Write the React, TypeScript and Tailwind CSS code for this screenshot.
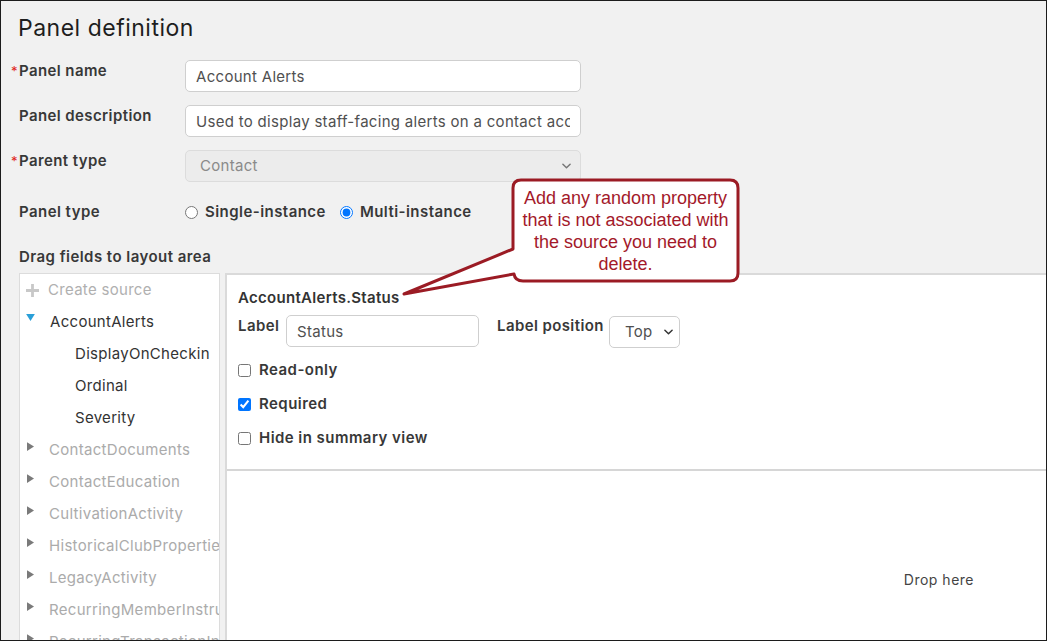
import { useState } from 'react'

const TREE_COLLAPSED = [
  'ContactDocuments',
  'ContactEducation',
  'CultivationActivity',
  'HistoricalClubProperties',
  'LegacyActivity',
  'RecurringMemberInstructions',
  'RecurringTransactionInstructions',
]

const CHILDREN = ['DisplayOnCheckin', 'Ordinal', 'Severity']

function Chevron({ className }: { className?: string }) {
  return (
    <svg viewBox="0 0 10 6" className={className} fill="none">
      <path d="M1 1l4 4 4-4" stroke="currentColor" strokeWidth="1.6" strokeLinecap="round" strokeLinejoin="round" />
    </svg>
  )
}

function FormRow({ label, required, children }: { label: string; required?: boolean; children: React.ReactNode }) {
  return (
    <div className="flex items-start">
      <div className="w-[184px] shrink-0 flex pl-[10px] pt-[2px] leading-[18px]">
        <span className="w-[8px] text-[#e0241b] text-[13px]">{required ? '*' : ''}</span>
        <span className="text-[15px] font-semibold tracking-[0.4px] text-[#383838]">{label}</span>
      </div>
      {children}
    </div>
  )
}

export default function App() {
  const [panelType, setPanelType] = useState<'single' | 'multi'>('multi')
  const [readOnly, setReadOnly] = useState(false)
  const [required, setRequired] = useState(true)
  const [hideSummary, setHideSummary] = useState(false)

  return (
    <div className="relative w-[1047px] h-[641px] overflow-hidden border border-[#1c1c1c] bg-[#f1f1f1] font-[Inter,sans-serif] text-[#383838]">
      {/* 見出し */}
      <div className="pl-[17px] pt-[12px] h-[59px] text-[23px] leading-[30px] tracking-[0.5px] text-[#1e1e1e]">Panel definition</div>

      <div className="flex flex-col gap-[13px]">
        <FormRow label="Panel name" required>
          <input
            defaultValue="Account Alerts"
            className="w-[396px] h-[32px] rounded-[5px] border border-[#cfcfcf] bg-white px-[10px] text-[15px] tracking-[0.3px] text-[#505050] outline-none"
          />
        </FormRow>
        <FormRow label="Panel description">
          <input
            defaultValue="Used to display staff-facing alerts on a contact account"
            className="w-[396px] h-[32px] rounded-[5px] border border-[#cfcfcf] bg-white px-[10px] text-[15px] tracking-[0.3px] text-[#505050] outline-none"
          />
        </FormRow>
        <FormRow label="Parent type" required>
          <div className="w-[396px] h-[32px] rounded-[5px] border border-[#dcdcdc] bg-[#ececec] pl-[14px] pr-[9px] flex items-center justify-between text-[15px] tracking-[0.3px] text-[#8a8a8a]">
            <span>Contact</span>
            <Chevron className="w-[9px] h-[6px] text-[#777]" />
          </div>
        </FormRow>
      </div>

      <div className="flex items-center mt-[19px] h-[22px] text-[15px] font-semibold tracking-[0.45px]">
        <div className="w-[184px] shrink-0 pl-[18px]">Panel type</div>
        <label className="flex items-center gap-[7px]">
          <input
            type="radio"
            checked={panelType === 'single'}
            onChange={() => setPanelType('single')}
            className="m-0 w-[13px] h-[13px]"
          />
          Single-instance
        </label>
        <label className="flex items-center gap-[7px] ml-[14px]">
          <input
            type="radio"
            checked={panelType === 'multi'}
            onChange={() => setPanelType('multi')}
            className="m-0 w-[13px] h-[13px]"
          />
          Multi-instance
        </label>
      </div>

      <div className="pl-[18px] mt-[25px] h-[25px] text-[15px] font-semibold tracking-[0.45px] leading-[18px]">Drag fields to layout area</div>

      <div className="flex h-[400px]">
        {/* ツリー */}
        <div className="ml-[18px] w-[201px] shrink-0 border-l border-t border-r border-[#dcdcdc] bg-white overflow-hidden text-[15px] tracking-[0.3px] whitespace-nowrap">
          <div className="h-[32px] flex items-center pl-[6px] text-[#b0b0b0]">
            <svg viewBox="0 0 14 14" className="w-[13px] h-[13px] mr-[9px]">
              <path d="M5.5 0h3v5.5H14v3H8.5V14h-3V8.5H0v-3h5.5z" fill="#c8c8c8" />
            </svg>
            Create source
          </div>
          <div className="h-[32px] flex items-center pl-[6px] text-[#333]">
            <svg viewBox="0 0 10 8" className="w-[9px] h-[7px] mr-[15px] -mt-[9px]">
              <path d="M0 0h10L5 8z" fill="#2a9fd8" />
            </svg>
            AccountAlerts
          </div>
          {CHILDREN.map((c) => (
            <div key={c} className="h-[32px] flex items-center pl-[55px] text-[#333]">
              {c}
            </div>
          ))}
          {TREE_COLLAPSED.map((t) => (
            <div key={t} className="h-[32px] flex items-center pl-[7px] text-[#ababab]">
              <svg viewBox="0 0 8 10" className="w-[7px] h-[9px] mr-[15px] -mt-[8px] shrink-0">
                <path d="M0 0l8 5-8 5z" fill="#7a7a7a" />
              </svg>
              {t}
            </div>
          ))}
        </div>

        {/* フィールド編集 */}
        <div className="ml-[5px] flex-1 flex flex-col border-l-2 border-t-2 border-[#dadada] bg-white">
          <div className="h-[196px] border-b-2 border-[#d6d6d6] pl-[11px] pt-[13px]">
            <div className="text-[15px] font-semibold tracking-[0.3px] leading-[20px] text-[#333]">AccountAlerts.Status</div>
            <div className="flex items-start mt-[7px] text-[15px] font-semibold tracking-[0.4px]">
              <div className="w-[48px] pt-[2px] leading-[18px]">Label</div>
              <input
                defaultValue="Status"
                className="w-[193px] h-[32px] rounded-[5px] border border-[#cfcfcf] bg-white px-[10px] font-normal tracking-[0.3px] text-[#505050] outline-none"
              />
              <div className="ml-[18px] w-[112px] pt-[2px] leading-[18px]">Label position</div>
              <div className="w-[71px] h-[32px] mt-[1px] rounded-[5px] border border-[#cfcfcf] bg-white pl-[15px] pr-[6px] flex items-center justify-between font-normal tracking-[0.3px] text-[#505050]">
                <span>Top</span>
                <Chevron className="w-[9px] h-[6px] text-[#333]" />
              </div>
            </div>
            <div className="flex flex-col gap-[14px] mt-[12px] text-[15px] font-semibold tracking-[0.45px] leading-[20px]">
              <label className="flex items-center gap-[8px]">
                <input type="checkbox" checked={readOnly} onChange={() => setReadOnly(!readOnly)} className="m-0 w-[13px] h-[13px]" />
                Read-only
              </label>
              <label className="flex items-center gap-[8px]">
                <input type="checkbox" checked={required} onChange={() => setRequired(!required)} className="m-0 w-[13px] h-[13px]" />
                Required
              </label>
              <label className="flex items-center gap-[8px]">
                <input type="checkbox" checked={hideSummary} onChange={() => setHideSummary(!hideSummary)} className="m-0 w-[13px] h-[13px]" />
                Hide in summary view
              </label>
            </div>
          </div>
          <div className="flex-1 flex justify-end pr-[72px] pt-[99px] text-[14px] tracking-[0.5px] text-[#444]">
            <span className="h-[20px] leading-[20px]">Drop here</span>
          </div>
        </div>
      </div>

      {/* 注釈の吹き出し */}
      <svg className="absolute left-0 top-0 w-[1047px] h-[641px] pointer-events-none" viewBox="0 0 1047 641">
        <path
          d="M520 179 H729 Q737 179 737 187 V272 Q737 280 729 280 H522 Q514 280 513 273 L403 293 L512 248 V187 Q512 179 520 179 Z"
          fill="white"
          stroke="#9b1b24"
          strokeWidth="3"
          strokeLinejoin="round"
        />
      </svg>
      <div className="absolute left-[512px] top-[186px] w-[225px] text-center font-['Liberation_Sans',Arial,sans-serif] text-[18px] leading-[22px] text-[#a3192a]">
        Add any random property
        <br />
        that is not associated with
        <br />
        the source you need to
        <br />
        delete.
      </div>
    </div>
  )
}
